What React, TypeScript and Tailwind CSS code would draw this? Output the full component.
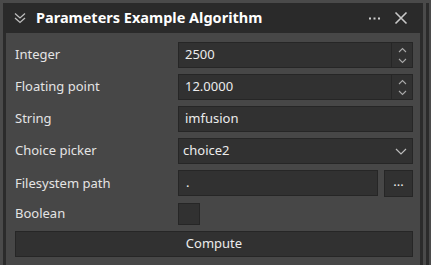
import { useState } from 'react';

const Chevron = ({ up }: { up?: boolean }) => (
  <svg width="9" height="6" viewBox="0 0 9 6" className="block">
    <path d={up ? "M1 5 L4.5 1.5 L8 5" : "M1 1 L4.5 4.5 L8 1"} fill="none" stroke="#a8a8a8" strokeWidth={1.1} />
  </svg>
);

const Spin = ({ value }: { value: string }) => (
  <div className="flex h-[26px] flex-1 border border-[#262626] bg-[#313131]">
    <div className="flex flex-1 items-center pl-[6px] text-[#ececec]">{value}</div>
    <div className="flex w-[21px] flex-col items-center justify-center gap-[5px] border-l border-[#262626]">
      <Chevron up />
      <Chevron />
    </div>
  </div>
);

const Row = ({ label, children }: { label: string; children: React.ReactNode }) => (
  <div className="flex items-center">
    <div className="w-[163px] shrink-0 text-[#e4e4e4]">{label}</div>
    <div className="flex flex-1">{children}</div>
  </div>
);

export default function App() {
  const [checked, setChecked] = useState(false);

  return (
    <div
      className="flex h-[265px] w-[431px] overflow-hidden bg-[#4a4a4a] pl-[3px] pt-[3px] text-[13px]"
      style={{ fontFamily: '"Noto Sans", "DejaVu Sans", sans-serif' }}
    >
      <div className="flex w-[420px] flex-col">
        {/* title bar */}
        <div className="flex h-[30px] shrink-0 items-center bg-[#2a2a2a] pl-[10px] pr-[15px]">
          <svg width="14" height="14" viewBox="0 0 14 14" className="mr-[9px]">
            <path d="M2 2.5 L7 7 L12 2.5 M2 7 L7 11.5 L12 7" fill="none" stroke="#bdbdbd" strokeWidth={1.3} />
          </svg>
          <span className="text-[14.5px] font-bold text-white">Parameters Example Algorithm</span>
          <div className="flex-1" />
          <svg width="11" height="3" viewBox="0 0 11 3" className="mr-[14px]">
            <rect x="0" y="0.5" width="2" height="2" fill="#cfcfcf" />
            <rect x="4.5" y="0.5" width="2" height="2" fill="#cfcfcf" />
            <rect x="9" y="0.5" width="2" height="2" fill="#cfcfcf" />
          </svg>
          <svg width="14" height="14" viewBox="0 0 14 14">
            <path d="M1.5 1.5 L12.5 12.5 M12.5 1.5 L1.5 12.5" fill="none" stroke="#c8c8c8" strokeWidth={1.6} />
          </svg>
        </div>

        {/* content */}
        <div className="flex flex-1 flex-col gap-[6px] border-x-[3px] border-[#2b2b2b] bg-[#474747] pl-[9px] pr-[7px] pt-[9px]">
          <Row label="Integer">
            <Spin value="2500" />
          </Row>
          <Row label="Floating point">
            <Spin value="12.0000" />
          </Row>
          <Row label="String">
            <div className="flex h-[26px] flex-1 items-center border border-[#262626] bg-[#313131] pl-[6px] text-[#ececec]">
              imfusion
            </div>
          </Row>
          <Row label="Choice picker">
            <div className="flex h-[26px] flex-1 items-center border border-[#262626] bg-[#313131] pl-[4px] pr-[5px] text-[#ececec]">
              <span className="flex-1">choice2</span>
              <svg width="12" height="7" viewBox="0 0 12 7">
                <path d="M1 1 L6 6 L11 1" fill="none" stroke="#bdbdbd" strokeWidth={1.2} />
              </svg>
            </div>
          </Row>
          <Row label="Filesystem path">
            <div className="flex flex-1 gap-[6px]">
              <div className="flex h-[26px] flex-1 items-center border border-[#262626] bg-[#313131] pl-[7px] text-[#ececec]">
                .
              </div>
              <button className="flex h-[27px] w-[29px] items-center justify-center border border-[#262626] bg-[#313131] pb-[4px] text-[#ececec]">
                ...
              </button>
            </div>
          </Row>
          <Row label="Boolean">
            <button
              onClick={() => setChecked(!checked)}
              className="h-[22px] w-[22px] border border-[#262626] bg-[#313131]"
            />
          </Row>
          <button className="h-[26px] border border-[#262626] bg-[#313131] text-[#ececec]">Compute</button>
        </div>
      </div>
      <div className="ml-[3px] w-[3px] bg-[#2b2b2b]" />
    </div>
  );
}
